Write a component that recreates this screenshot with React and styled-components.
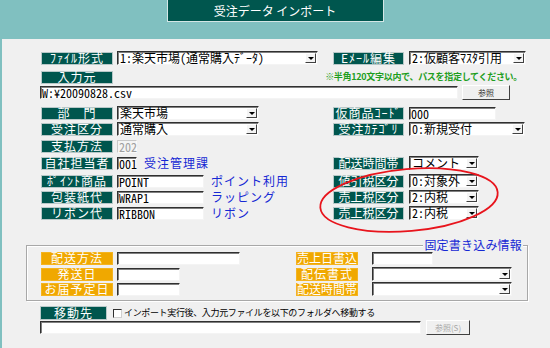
import React from 'react';
import styled, { createGlobalStyle } from 'styled-components';

const GlobalStyle = createGlobalStyle`
  html, body {
    margin: 0;
    padding: 0;
  }
  body {
    width: 550px;
    height: 348px;
    overflow: hidden;
    background: #80c0c0;
    font-family: "Noto Sans CJK JP", "Noto Sans", sans-serif;
  }
`;

const mono = `"Noto Sans Mono CJK JP", "DejaVu Sans Mono", "Noto Sans CJK JP", monospace`;

const Screen = styled.div`
  position: relative;
  width: 550px;
  height: 348px;
  display: flex;
  flex-direction: column;
`;

const Header = styled.header`
  height: 39px;
  display: flex;
  justify-content: center;
  align-items: flex-start;
`;

const TitleBox = styled.h1`
  margin: 0;
  width: 217px;
  height: 22px;
  box-sizing: border-box;
  background: #00564e;
  border: 1px solid #d4e6e6;
  border-top: none;
  color: #fff;
  font-size: 12px;
  font-weight: normal;
  line-height: 21px;
  text-align: center;
`;

const Panel = styled.main`
  flex: 1;
  margin-left: 2px;
  background: #f0f0f0;
  padding-top: 12px;
`;

const Row = styled.div`
  display: flex;
  align-items: center;
  height: ${(p) => p.$h || 14}px;
  margin-top: ${(p) => p.$mt || 0}px;
  padding-left: ${(p) => (p.$pl === undefined ? 39 : p.$pl)}px;
`;

const Cell = styled.div`
  display: flex;
  align-items: center;
  width: ${(p) => (p.$w ? `${p.$w}px` : 'auto')};
  flex-shrink: 0;
`;

const FieldLabel = styled.div`
  width: ${(p) => p.$w || 72}px;
  height: ${(p) => p.$h || 13}px;
  margin-right: ${(p) => (p.$mr === undefined ? 4 : p.$mr)}px;
  flex-shrink: 0;
  display: flex;
  align-items: center;
  justify-content: center;
  background: ${(p) => (p.$orange ? '#f0a800' : '#00564e')};
  box-shadow: inset 0 0 0 1px ${(p) => (p.$orange ? '#f4b420' : '#b8c8c8')};
  color: #fff;
  font-size: 12px;
  line-height: 12px;
  letter-spacing: ${(p) => (p.$tight ? 0 : 1)}px;
  white-space: nowrap;
`;

const TextBox = styled.div`
  width: ${(p) => p.$w}px;
  height: 13px;
  box-sizing: border-box;
  flex-shrink: 0;
  display: flex;
  align-items: center;
  background: ${(p) => (p.$disabled ? '#f4f4f4' : '#fff')};
  border: 1px solid;
  border-color: ${(p) =>
    p.$disabled ? '#c8c8c8 #fafafa #fafafa #c8c8c8' : '#303030 #f4f4f4 #f4f4f4 #303030'};
  box-shadow: ${(p) => (p.$disabled ? 'none' : 'inset 1px 1px 0 #808080')};
  color: ${(p) => (p.$disabled ? '#a0a0a0' : '#000')};
  font-family: ${mono};
  font-size: 12px;
  line-height: 11px;
  padding-left: 1px;
  white-space: nowrap;
`;

const SelectBox = styled.div`
  width: ${(p) => p.$w}px;
  height: 14px;
  box-sizing: border-box;
  flex-shrink: 0;
  display: flex;
  align-items: center;
  background: #fff;
  border: 1px solid;
  border-color: #303030 #f4f4f4 #f4f4f4 #303030;
  box-shadow: inset 1px 1px 0 #808080;
  font-family: ${mono};
  font-size: 12px;
  line-height: 12px;
  padding-left: 2px;
  white-space: nowrap;
`;

const SelectText = styled.span`
  flex: 1;
`;

const Arrow = styled.span`
  width: 11px;
  height: 10px;
  margin-right: 1px;
  box-sizing: border-box;
  flex-shrink: 0;
  display: flex;
  align-items: center;
  justify-content: center;
  background: #f4f4f4;
  border: 1px solid;
  border-color: #ffffff #404040 #404040 #ffffff;

  &::after {
    content: '';
    border-left: 3px solid transparent;
    border-right: 3px solid transparent;
    border-top: 3px solid #000;
  }
`;

const Select = ({ w, children }) => (
  <SelectBox $w={w}>
    <SelectText>{children}</SelectText>
    <Arrow />
  </SelectBox>
);

const LinkText = styled.span`
  margin-left: 7px;
  color: #1628d4;
  font-size: 12px;
  line-height: 12px;
  letter-spacing: 1px;
  white-space: nowrap;
`;

const Note = styled.span`
  margin-left: auto;
  margin-right: 28px;
  color: #1e9e1e;
  font-size: 9px;
  line-height: 10px;
  font-weight: bold;
  letter-spacing: -0.3px;
  white-space: nowrap;
`;

const Button = styled.button`
  width: ${(p) => p.$w}px;
  height: 15px;
  margin-left: ${(p) => p.$ml || 4}px;
  padding: 0;
  box-sizing: border-box;
  background: #f0f0f0;
  border: 1px solid;
  border-color: #ffffff #404040 #404040 #ffffff;
  color: ${(p) => (p.disabled ? '#a8a8a8' : '#333')};
  font-family: "Noto Sans CJK JP", sans-serif;
  font-size: 8px;
  line-height: 12px;
`;

const Group = styled.section`
  position: relative;
  width: 502px;
  height: 56px;
  margin: 25px 0 0 24px;
  box-sizing: border-box;
  border: 1px solid #a8a8a8;
  box-shadow: inset 1px 1px 0 #fff, 1px 1px 0 #fff;
  padding-top: 5px;
`;

const Legend = styled.span`
  position: absolute;
  right: 4px;
  top: -8px;
  padding: 0 1px;
  background: #f0f0f0;
  color: #1628d4;
  font-size: 12px;
  line-height: 14px;
  letter-spacing: 0.2px;
`;

const Check = styled.span`
  display: inline-block;
  width: 9px;
  height: 9px;
  margin: 0 2px 0 6px;
  box-sizing: border-box;
  background: #fff;
  border: 1px solid;
  border-color: #303030 #d0d0d0 #d0d0d0 #303030;
`;

const CheckText = styled.span`
  font-size: 9px;
  line-height: 10px;
  letter-spacing: -0.35px;
  color: #000;
  white-space: nowrap;
`;

const Circle = styled.svg`
  position: absolute;
  left: 0;
  top: 0;
  pointer-events: none;
`;

export default function App() {
  return (
    <Screen>
      <GlobalStyle />
      <Header>
        <TitleBox>受注データ インポート</TitleBox>
      </Header>
      <Panel>
        <Row>
          <Cell $w={292}>
            <FieldLabel>ﾌｧｲﾙ形式</FieldLabel>
            <Select w={201}>1:楽天市場(通常購入ﾃﾞｰﾀ)</Select>
          </Cell>
          <Cell>
            <FieldLabel $w={71} $mr={5}>Eﾒｰﾙ編集</FieldLabel>
            <Select w={117}>2:仮顧客ﾏｽﾀ引用</Select>
          </Cell>
        </Row>
        <Row $mt={5}>
          <FieldLabel>入力元</FieldLabel>
          <Note>※半角120文字以内で、パスを指定してください。</Note>
        </Row>
        <Row $mt={1} $h={15} $pl={38}>
          <TextBox $w={418}>W:¥20090828.csv</TextBox>
          <Button $w={48}>参照</Button>
        </Row>
        <Row $mt={6}>
          <Cell $w={292}>
            <FieldLabel>部　門</FieldLabel>
            <Select w={142}>楽天市場</Select>
          </Cell>
          <Cell>
            <FieldLabel $w={71} $mr={5}>仮商品ｺｰﾄﾞ</FieldLabel>
            <TextBox $w={87}>000</TextBox>
          </Cell>
        </Row>
        <Row $mt={2}>
          <Cell $w={292}>
            <FieldLabel>受注区分</FieldLabel>
            <Select w={142}>通常購入</Select>
          </Cell>
          <Cell>
            <FieldLabel $w={71} $mr={5}>受注ｶﾃｺﾞﾘ</FieldLabel>
            <Select w={116}>0:新規受付</Select>
          </Cell>
        </Row>
        <Row $mt={3}>
          <Cell $w={292}>
            <FieldLabel>支払方法</FieldLabel>
            <TextBox $w={20} $disabled>202</TextBox>
          </Cell>
        </Row>
        <Row $mt={3}>
          <Cell $w={292}>
            <FieldLabel>自社担当者</FieldLabel>
            <TextBox $w={20}>001</TextBox>
            <LinkText>受注管理課</LinkText>
          </Cell>
          <Cell>
            <FieldLabel $w={71} $mr={5} $tight>配送時間帯</FieldLabel>
            <Select w={70}>コメント</Select>
          </Cell>
        </Row>
        <Row $mt={4}>
          <Cell $w={292}>
            <FieldLabel>ﾎﾟｲﾝﾄ商品</FieldLabel>
            <TextBox $w={87}>POINT</TextBox>
            <LinkText>ポイント利用</LinkText>
          </Cell>
          <Cell>
            <FieldLabel $w={71} $mr={5} $tight>値引税区分</FieldLabel>
            <Select w={70}>0:対象外</Select>
          </Cell>
        </Row>
        <Row $mt={2}>
          <Cell $w={292}>
            <FieldLabel>包装紙代</FieldLabel>
            <TextBox $w={87}>WRAP1</TextBox>
            <LinkText>ラッピング</LinkText>
          </Cell>
          <Cell>
            <FieldLabel $w={71} $mr={5} $tight>売上税区分</FieldLabel>
            <Select w={70}>2:内税</Select>
          </Cell>
        </Row>
        <Row $mt={2}>
          <Cell $w={292}>
            <FieldLabel>リボン代</FieldLabel>
            <TextBox $w={87}>RIBBON</TextBox>
            <LinkText>リボン</LinkText>
          </Cell>
          <Cell>
            <FieldLabel $w={71} $mr={5} $tight>売上税区分</FieldLabel>
            <Select w={70}>2:内税</Select>
          </Cell>
        </Row>

        <Group>
          <Legend>固定書き込み情報</Legend>
          <Row $pl={14}>
            <Cell $w={255}>
              <FieldLabel $orange>配送方法</FieldLabel>
              <TextBox $w={123} />
            </Cell>
            <Cell>
              <FieldLabel $orange $w={62} $mr={14} $tight>売上日書込</FieldLabel>
              <TextBox $w={61} />
            </Cell>
          </Row>
          <Row $pl={14} $mt={2}>
            <Cell $w={255}>
              <FieldLabel $orange>発送日</FieldLabel>
              <TextBox $w={63} />
            </Cell>
            <Cell>
              <FieldLabel $orange $w={62} $mr={14}>配伝書式</FieldLabel>
              <Select w={140} />
            </Cell>
          </Row>
          <Row $pl={14} $mt={1}>
            <Cell $w={255}>
              <FieldLabel $orange>お届予定日</FieldLabel>
              <TextBox $w={63} />
            </Cell>
            <Cell>
              <FieldLabel $orange $w={62} $mr={14} $tight>配送時間帯</FieldLabel>
              <Select w={140} />
            </Cell>
          </Row>
        </Group>

        <Row $mt={5} $pl={38}>
          <FieldLabel $w={67} $h={14} $mr={0}>移動先</FieldLabel>
          <Check />
          <CheckText>インポート実行後、入力元ファイルを以下のフォルダへ移動する</CheckText>
        </Row>
        <Row $h={15} $pl={38}>
          <TextBox $w={381} />
          <Button $w={44} $ml={5} disabled>参照(S)</Button>
        </Row>
      </Panel>
      <Circle width="550" height="348" viewBox="0 0 550 348">
        <ellipse
          cx="409"
          cy="200"
          rx="89"
          ry="31"
          fill="none"
          stroke="#e8141c"
          strokeWidth="1.8"
          transform="rotate(-5 409 200)"
        />
      </Circle>
    </Screen>
  );
}
